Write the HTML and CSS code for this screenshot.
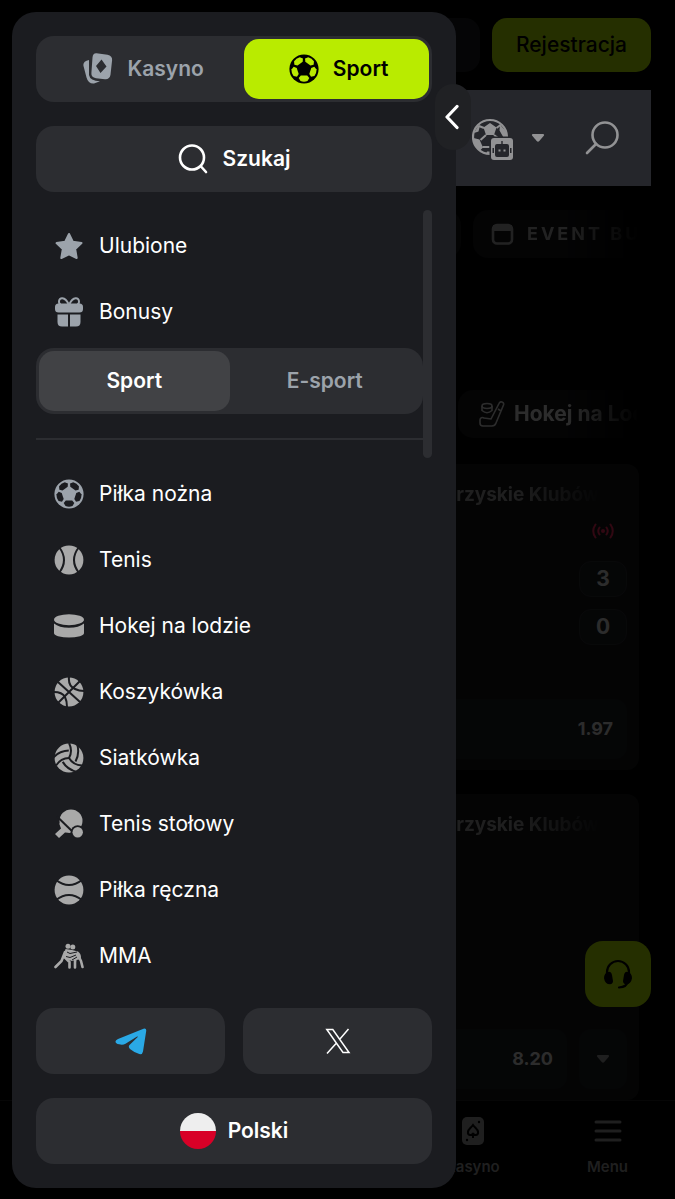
FILE: index.html
```html
<!DOCTYPE html>
<html lang="pl">
<head>
  <meta charset="UTF-8">
  <meta name="viewport" content="width=device-width, initial-scale=1">
  <title>Sport</title>
  <link rel="stylesheet" href="styles.css">
</head>
<body>

  <!-- shared icons -->
  <svg class="sprite" aria-hidden="true">
    <defs>
      <path id="panel" d="M11.8 21.6h6.4l2.1 2.5-1.8 3q-3.5 1.2-7 0l-1.8-3z"/>
      <mask id="ball-mask">
        <circle cx="15" cy="15" r="14.6" fill="#fff"/>
        <use href="#panel"/>
        <use href="#panel" transform="rotate(72 15 15)"/>
        <use href="#panel" transform="rotate(144 15 15)"/>
        <use href="#panel" transform="rotate(216 15 15)"/>
        <use href="#panel" transform="rotate(288 15 15)"/>
      </mask>
    </defs>
    <symbol id="ball" viewBox="0 0 30 30">
      <rect width="30" height="30" fill="currentColor" mask="url(#ball-mask)"/>
    </symbol>
    <symbol id="caret" viewBox="0 0 14 10">
      <path d="M2 1h10a1 1 0 0 1 .8 1.700L8.300 8a1.700 1.700 0 0 1-2.600 0L1.200 2.700A1 1 0 0 1 2 1z" fill="currentColor"/>
    </symbol>
  </svg>

  <div class="page">
    <header class="header">
      <button class="btn btn-login" type="button" aria-label="Zaloguj się"></button>
      <button class="btn btn-register" type="button">Rejestracja</button>
    </header>

    <div class="toolbar">
      <button class="tool" type="button" aria-label="Wybierz sport">
        <svg width="42" height="46" viewBox="0 -4 42 46">
          <circle cx="18" cy="18" r="17" fill="none" stroke="currentColor" stroke-width="2.200"/>
          <path d="M11.500 8.500L18 4l6.500 4.500L22 16h-8zM1.500 19l6 1.500 3.500 8-3.500 3.500Q1.500 27 1.500 19zM2 14l4-7 2-.500-1.500 6zM28 5.500l6 7 .500 7-3-1-4-7zM15 32.500h6l1 2.500h-8z" fill="currentColor"/>
          <path d="M12 9L7 7M14 16l-5.500 5M22 16l6 4.500M24.500 9l4-3M10.500 28h7" stroke="currentColor" stroke-width="2"/>
          <rect class="tool-gap" x="17.500" y="17.500" width="25" height="25" rx="4"/>
          <rect x="19" y="19" width="22" height="22" rx="3" fill="currentColor"/>
          <path class="tool-gap" d="M29.300 22h1.400v3h4.300a2 2 0 0 1 2 2v9a2 2 0 0 1-2 2H25a2 2 0 0 1-2-2v-9a2 2 0 0 1 2-2h4.300zM20.500 29h1.500v5h-1.500zM38 29h1.500v5H38z"/>
          <path d="M26.500 30.500h2v2h-2zM31.500 30.500h2v2h-2z" fill="currentColor"/>
        </svg>
        <svg width="14" height="10"><use href="#caret"/></svg>
      </button>
      <button class="tool" type="button" aria-label="Szukaj wydarzeń">
        <svg width="34" height="34" viewBox="0 0 34 34" fill="none" stroke="currentColor" stroke-width="2.600" stroke-linecap="round">
          <circle cx="20" cy="14" r="12.500"/>
          <path d="M11 23L2 32"/>
        </svg>
      </button>
    </div>

    <main class="content">
      <div class="chips">
        <span class="chip chip-first"></span>
        <a class="chip chip-event" href="#">
          <svg width="24" height="24" viewBox="0 0 24 24">
            <rect x="2" y="3" width="19" height="18.500" rx="4" fill="none" stroke="currentColor" stroke-width="2.600"/>
            <path d="M2 3h19v6H2z" fill="currentColor"/>
          </svg>
          <span>EVENT BUILDER</span>
        </a>
      </div>

      <div class="chips chips-sports">
        <span class="chip chip-first"></span>
        <a class="chip" href="#">
          <svg width="26" height="26" viewBox="0 0 26 26" fill="none" stroke="currentColor" stroke-width="1.600">
            <path d="M20 2.500a2.300 2.300 0 0 1 4.500 1.500L17 22q-1 3-4 3H4a3 3 0 0 1-3-3v-3a2.500 2.500 0 0 1 4-2l7 1zM19 8l3 2"/>
            <ellipse cx="8" cy="5" rx="5" ry="2.500"/>
            <path d="M3 5v4.500q5 4.500 10 0V5"/>
          </svg>
          <span>Hokej na Lodzie</span>
        </a>
      </div>

      <article class="card">
        <h2 class="card-title">Mecze Towarzyskie Klubów</h2>
        <div class="live">
          <svg width="22" height="16" viewBox="0 0 22 16" fill="none" stroke="currentColor" stroke-width="2" stroke-linecap="round">
            <circle cx="11" cy="8" r="2" fill="currentColor" stroke="none"/>
            <path d="M7.500 4.500q-2.500 3.500 0 7M14.500 4.500q2.500 3.500 0 7M3.500 1.500q-4.500 6.500 0 13M18.500 1.500q4.500 6.500 0 13"/>
          </svg>
        </div>
        <div class="scores">
          <span class="score">3</span>
          <span class="score">0</span>
        </div>
        <div class="odds">
          <button class="odd" type="button">1.97</button>
        </div>
      </article>

      <article class="card">
        <h2 class="card-title">Mecze Towarzyskie Klubów</h2>
        <div class="odds">
          <button class="odd" type="button">8.20</button>
          <button class="odd odd-more" type="button" aria-label="Więcej kursów">
            <svg width="14" height="10"><use href="#caret"/></svg>
          </button>
        </div>
      </article>
    </main>
  </div>

  <button class="support" type="button" aria-label="Pomoc">
    <svg width="30" height="30" viewBox="0 0 30 30">
      <path d="M4 15v-2a11 11 0 0 1 22 0v2M25 22q-1 6-9 6.500" fill="none" stroke="currentColor" stroke-width="2.200" stroke-linecap="round"/>
      <path d="M5 13q3-1 4 3l1 6q0 3-3 3.200-5 0-6-6 0-5 4-6.200zM25 13q-3-1-4 3l-1 6q0 3 3 3.200 5 0 6-6 0-5-4-6.200z" fill="currentColor"/>
    </svg>
  </button>

  <nav class="bottom-nav">
    <a class="bottom-casino" href="#">
      <svg width="30" height="30" viewBox="0 0 30 30">
        <rect x="4" y="1" width="22" height="28" rx="5" fill="currentColor"/>
        <path d="M15 9c2 3 5 4 5 7a2.500 2.500 0 0 1-5 1 2.500 2.500 0 0 1-5-1c0-3 3-4 5-7zM15 17v5" fill="none" stroke="#000" stroke-width="2"/>
        <circle cx="21" cy="6" r="1.200"/><circle cx="9" cy="24" r="1.200"/>
      </svg>
      Kasyno
    </a>
    <a href="#">
      <svg width="30" height="30" viewBox="0 0 30 30" stroke="currentColor" stroke-width="3" stroke-linecap="round">
        <path d="M3 6h24M3 15h24M3 24h24"/>
      </svg>
      Menu
    </a>
  </nav>

  <div class="backdrop"></div>

  <aside class="drawer">
    <button class="drawer-close" type="button" aria-label="Zamknij menu">
      <svg width="16" height="26" viewBox="0 0 16 26" fill="none" stroke="currentColor" stroke-width="3.200" stroke-linecap="round" stroke-linejoin="round">
        <path d="M12 2.500L2 13l10 10.500"/>
      </svg>
    </button>

    <div class="switch">
      <a class="switch-item" href="#">
        <svg width="30" height="32" viewBox="0 0 30 32">
          <path d="M6 7Q-.500 8.500.500 13l3 11.500q1.800 6.500 7.500 6l6-2.300Q7 28 6 22z" fill="currentColor"/>
          <path fill-rule="evenodd" d="M13.500.300l11 1.500q5 1 4.600 5.500l-1.600 14.500q-.800 4.700-5.500 4.400l-9-1q-5-.700-4.600-5.200L9.500 4.500Q10 0 13.500.300zM18.500 6.500L13 13l4.500 7 6-6.500z" fill="currentColor"/>
        </svg>
        Kasyno
      </a>
      <a class="switch-item active" href="#">
        <svg width="30" height="30"><use href="#ball"/></svg>
        Sport
      </a>
    </div>

    <button class="bar bar-search" type="button">
      <svg width="30" height="30" viewBox="0 0 30 30" fill="none" stroke="currentColor" stroke-width="2.600" stroke-linecap="round">
        <circle cx="14" cy="13.500" r="12"/>
        <path d="M23 22.500L28 28"/>
      </svg>
      Szukaj
    </button>

    <div class="menu">
      <nav class="menu-scroll">
        <a class="menu-item" href="#">
          <svg width="30" height="30" viewBox="0 0 30 30">
            <path d="M15 3l3.800 7.800 8.700 1.300-6.300 6 1.500 8.900L15 23.300 7.300 27l1.500-8.900-6.300-6 8.700-1.300z" fill="currentColor" stroke="currentColor" stroke-width="2" stroke-linejoin="round"/>
          </svg>
          Ulubione
        </a>
        <a class="menu-item" href="#">
          <svg width="30" height="30" viewBox="0 0 30 30">
            <path d="M14.500 7C11-.500 5 0 5 4.500c0 2 1 3 2 3M15.500 7C19-.500 25 0 25 4.500c0 2-1 3-2 3" fill="none" stroke="currentColor" stroke-width="2"/>
            <rect x="1" y="6.500" width="28" height="9" rx="3.500" fill="currentColor"/>
            <path d="M3.500 17.500H14v12H8q-4.500 0-4.500-4.500zM16 17.500h10.500V25q0 4.500-4.500 4.500h-6z" fill="currentColor"/>
          </svg>
          Bonusy
        </a>

        <div class="tabs">
          <button class="tab active" type="button">Sport</button>
          <button class="tab" type="button">E-sport</button>
        </div>
        <hr class="divider">

        <a class="menu-item" href="#">
          <svg width="30" height="30"><use href="#ball"/></svg>
          Piłka nożna
        </a>
        <a class="menu-item sport" href="#">
          <svg width="30" height="30" viewBox="0 0 30 30">
            <circle cx="15" cy="15" r="14.400" fill="currentColor"/>
            <path class="cut" d="M5 2q10 13 0 26M25 2q-10 13 0 26"/>
          </svg>
          Tenis
        </a>
        <a class="menu-item sport" href="#">
          <svg width="30" height="30" viewBox="0 0 30 30">
            <ellipse cx="15" cy="8.700" rx="15" ry="5.500" fill="currentColor"/>
            <path d="M0 12.500q5 4.200 15 4.200t15-4.200v9.500q0 2-4 3.200-11 2.800-22 0-4-1.200-4-3.200z" fill="currentColor"/>
          </svg>
          Hokej na lodzie
        </a>
        <a class="menu-item sport" href="#">
          <svg width="30" height="30" viewBox="0 0 30 30">
            <circle cx="15" cy="15" r="14.400" fill="currentColor"/>
            <path class="cut" d="M27 3L3 27M4 5l22 20M15 0q-1 9 6 12 4 2 9 2M0 15q8 0 11 5 2 4 2 10"/>
          </svg>
          Koszykówka
        </a>
        <a class="menu-item sport" href="#">
          <svg width="30" height="30" viewBox="0 0 30 30">
            <circle cx="15" cy="15" r="14.400" fill="currentColor"/>
            <g id="swirl">
              <path class="cut" d="M15 15Q19 8 15 0M21.500 18.500q4.500-8 1.500-18"/>
            </g>
            <use href="#swirl" transform="rotate(120 15 15)"/>
            <use href="#swirl" transform="rotate(240 15 15)"/>
          </svg>
          Siatkówka
        </a>
        <a class="menu-item sport" href="#">
          <svg width="30" height="30" viewBox="0 0 30 30">
            <circle cx="17" cy="12" r="11.500" fill="currentColor"/>
            <path d="M5 14l12 10-6-.500L5 29l-4-4 6-5.500z" fill="currentColor"/>
            <path class="cut" d="M3 7.500L21 25"/>
            <circle class="ball-gap" cx="23.700" cy="23.300" r="7"/>
            <circle cx="23.700" cy="23.300" r="5.200" fill="currentColor"/>
          </svg>
          Tenis stołowy
        </a>
        <a class="menu-item sport" href="#">
          <svg width="30" height="30" viewBox="0 0 30 30">
            <circle cx="15" cy="15" r="14.400" fill="currentColor"/>
            <path class="cut" d="M2 5q13 10 26 0M2 25q13-10 26 0"/>
          </svg>
          Piłka ręczna
        </a>
        <a class="menu-item sport" href="#">
          <svg width="30" height="30" viewBox="0 0 30 30">
            <circle cx="14" cy="5.200" r="2.500" fill="currentColor"/>
            <circle cx="18.800" cy="6" r="2.500" fill="currentColor"/>
            <path d="M11.500 8L18 9l6 1.500q3 2 3 6l-1.500 2L22 19l-4 1-6-2-3-1z" fill="currentColor"/>
            <path d="M11 11L7.500 20 1.500 26M11.500 17l4 4v5.500M21.500 17L21 21v5.500M24 14l3 6 1.500 6" fill="none" stroke="currentColor" stroke-width="2.600" stroke-linecap="round" stroke-linejoin="round"/>
            <path class="cut thin" d="M13 11l3 1.500 7-1.500M12 15.500l4 1 6-2.500M18 19l5-3"/>
          </svg>
          MMA
        </a>
      </nav>
      <div class="menu-thumb"></div>
    </div>

    <div class="socials">
      <a class="bar" href="#" aria-label="Telegram">
        <svg class="telegram" width="32" height="28" viewBox="0 0 32 28">
          <path d="M28.500 1.700q3-.900 2.700 2.200L28 24.500q-.600 3.400-3.700 2.600-4.800-1.400-9.300-5.100-2.400-2.200 0-4.400L23 9.700q-.300-.500-1.300 0L10.500 16.800q-2.800 1.500-6.400.500Q.300 16.500.500 14.500q0-1.300 2.500-2.500z" fill="currentColor"/>
        </svg>
      </a>
      <a class="bar" href="#" aria-label="X">
        <svg width="26" height="26" viewBox="0 0 26 26" fill="none" stroke="currentColor" stroke-width="1.500">
          <path d="M1.800 1.500h6L24 24.500h-6zM23.500 1L14.500 11.500M11.500 15L2 25.500"/>
        </svg>
      </a>
    </div>

    <button class="bar bar-lang" type="button">
      <span class="flag"></span>
      Polski
    </button>
  </aside>

</body>
</html>
```
FILE: styles.css
```css
* {
  box-sizing: border-box;
}

body {
  margin: 0;
  min-height: 100vh;
  background: #000;
  color: #fff;
  font-family: Inter, 'Liberation Sans', sans-serif;
  font-size: 21px;
  font-weight: 500;
  line-height: 30px;
  overflow: hidden;
}

a {
  color: inherit;
  text-decoration: none;
}

button {
  padding: 0;
  border: none;
  color: inherit;
  font: inherit;
  cursor: pointer;
}

svg {
  display: block;
  flex-shrink: 0;
}

.sprite {
  position: absolute;
  width: 0;
  height: 0;
}

/* page under the drawer */
.page {
  padding: 0 24px;
}

.header {
  display: flex;
  justify-content: flex-end;
  gap: 12px;
  padding: 18px 0;
}

.btn {
  height: 54px;
  padding: 0 24px;
  border-radius: 15px;
}

.btn-login {
  width: 140px;
  background: #1b1c20;
}

.btn-register {
  background: #b9eb00;
  color: #000;
}

.toolbar {
  position: relative;
  z-index: 3;
  display: flex;
  justify-content: flex-end;
  gap: 40px;
  height: 96px;
  padding: 0 32px;
  background: #25262b;
  color: #929294;
}

.tool {
  display: flex;
  align-items: center;
  gap: 17px;
  background: none;
}

.tool-gap {
  fill: #25262b;
}

.content {
  padding: 24px 12px 0;
}

.chips {
  display: flex;
  gap: 12px;
  overflow: hidden;
  -webkit-mask-image: linear-gradient(to right, #000 88%, transparent);
  mask-image: linear-gradient(to right, #000 88%, transparent);
}

.chips-sports {
  margin: 132px 0 26px;
}

.chip {
  display: flex;
  flex-shrink: 0;
  align-items: center;
  gap: 9px;
  height: 48px;
  padding: 0 21px;
  border-radius: 15px;
  background: #141416;
  color: #ddd;
  font-weight: 700;
}

.chip-first {
  width: 425px;
}

.chips-sports .chip-first {
  width: 410px;
}

.chip-event {
  padding: 0 18px;
  gap: 12px;
  color: #aaa;
  font-size: 18px;
  letter-spacing: 3px;
}

.card {
  display: flex;
  flex-direction: column;
  height: 306px;
  margin-bottom: 24px;
  padding: 16px 12px 11px;
  border-radius: 12px;
  background: #151618;
}

.card-title {
  margin: 0 28px 0 0;
  color: #999;
  font-size: 19px;
  font-weight: 700;
  text-align: right;
  -webkit-mask-image: linear-gradient(to right, #000 85%, transparent);
  mask-image: linear-gradient(to right, #000 85%, transparent);
}

.live {
  display: flex;
  justify-content: center;
  align-self: flex-end;
  width: 48px;
  padding: 13px 0 22px;
  color: #f5285a;
}

.scores {
  display: flex;
  flex-direction: column;
  align-items: flex-end;
  gap: 12px;
}

.score {
  width: 48px;
  height: 36px;
  border: 1px solid #2c2d31;
  border-radius: 12px;
  background: #1d1e21;
  color: #ddd;
  font-weight: 700;
  line-height: 34px;
  text-align: center;
}

.odds {
  display: flex;
  gap: 12px;
  margin-top: auto;
}

.odd {
  flex: 1;
  height: 60px;
  padding-right: 14px;
  border-radius: 12px;
  background: #1d1e21;
  color: #ddd;
  font-size: 18px;
  font-weight: 700;
  text-align: right;
}

.odd-more {
  display: flex;
  flex: 0 0 48px;
  align-items: center;
  justify-content: center;
  padding: 0;
  color: #999;
}

.support {
  position: fixed;
  right: 24px;
  bottom: 192px;
  display: grid;
  place-items: center;
  width: 66px;
  height: 66px;
  border-radius: 18px;
  background: #b9eb00;
  color: #000;
}

.bottom-nav {
  position: fixed;
  inset: auto 0 0 0;
  display: grid;
  grid-template-columns: repeat(5, 1fr);
  height: 99px;
  border-top: 1px solid #222;
  background: #000;
}

.bottom-nav a {
  display: flex;
  flex-direction: column;
  align-items: center;
  gap: 6px;
  padding-top: 15px;
  color: #999;
  font-size: 15px;
  font-weight: 600;
}

.bottom-casino {
  grid-column: 4;
}

.backdrop {
  position: fixed;
  inset: 0;
  z-index: 2;
  background: rgba(0, 0, 0, 0.8);
}

/* drawer */
.drawer {
  position: fixed;
  top: 12px;
  bottom: 11px;
  left: 12px;
  z-index: 4;
  display: flex;
  flex-direction: column;
  width: 444px;
  max-width: calc(100% - 36px);
  padding: 24px;
  border-radius: 24px;
  background: #1b1c20;
}

.drawer-close {
  position: absolute;
  top: 72px;
  right: -15px;
  display: grid;
  place-items: center;
  width: 36px;
  height: 66px;
  border-radius: 18px;
  background: #202124;
}

.switch,
.tabs {
  display: flex;
  flex-shrink: 0;
  height: 66px;
  padding: 3px;
  border-radius: 18px;
  background: #2c2d31;
  color: #9ca3ab;
  font-weight: 600;
}

.switch-item {
  display: flex;
  flex: 1 1 auto;
  align-items: center;
  justify-content: center;
  gap: 14px;
  padding-left: 4px;
  border-radius: 15px;
}

.switch-item.active {
  background: #b9eb00;
  color: #000;
}

.bar {
  display: flex;
  flex: 0 0 66px;
  align-items: center;
  justify-content: center;
  gap: 15px;
  border-radius: 18px;
  background: #2c2d31;
  font-weight: 600;
}

.bar-search {
  margin: 24px 0 18px;
}

.menu {
  position: relative;
  flex: 1;
  min-height: 0;
}

.menu-scroll {
  height: 100%;
  padding: 3px 9px 0 0;
  overflow: hidden;
}

.menu-thumb {
  position: absolute;
  top: 0;
  right: 0;
  width: 9px;
  height: 248px;
  border-radius: 5px;
  background: #2c2d31;
}

.menu-item {
  display: flex;
  align-items: center;
  gap: 15px;
  height: 66px;
  padding-left: 18px;
  color: #fff;
  font-weight: 400;
}

.menu-item svg {
  color: #9ca3ab;
}

.menu-item.sport svg {
  color: #a9a9a9;
}

.cut {
  fill: none;
  stroke: #1b1c20;
  stroke-width: 2;
}

.cut.thin {
  stroke-width: 1;
}

.ball-gap {
  fill: #1b1c20;
}

.tabs {
  margin-top: 3px;
}

.tab {
  flex: 1;
  border-radius: 15px;
  background: none;
}

.tab.active {
  background: #414245;
  color: #fff;
}

.divider {
  height: 2px;
  margin: 24px 0 21px;
  border: none;
  background: #2c2d31;
}

.socials {
  display: flex;
  gap: 18px;
  margin: 18px 0 24px;
}

.socials .bar {
  flex: 1;
  height: 66px;
}

.telegram {
  color: #2aa9e6;
}

.bar-lang {
  gap: 12px;
}

.flag {
  width: 36px;
  height: 36px;
  border-radius: 50%;
  background: linear-gradient(#eee 50%, #d80027 50%);
}
```
